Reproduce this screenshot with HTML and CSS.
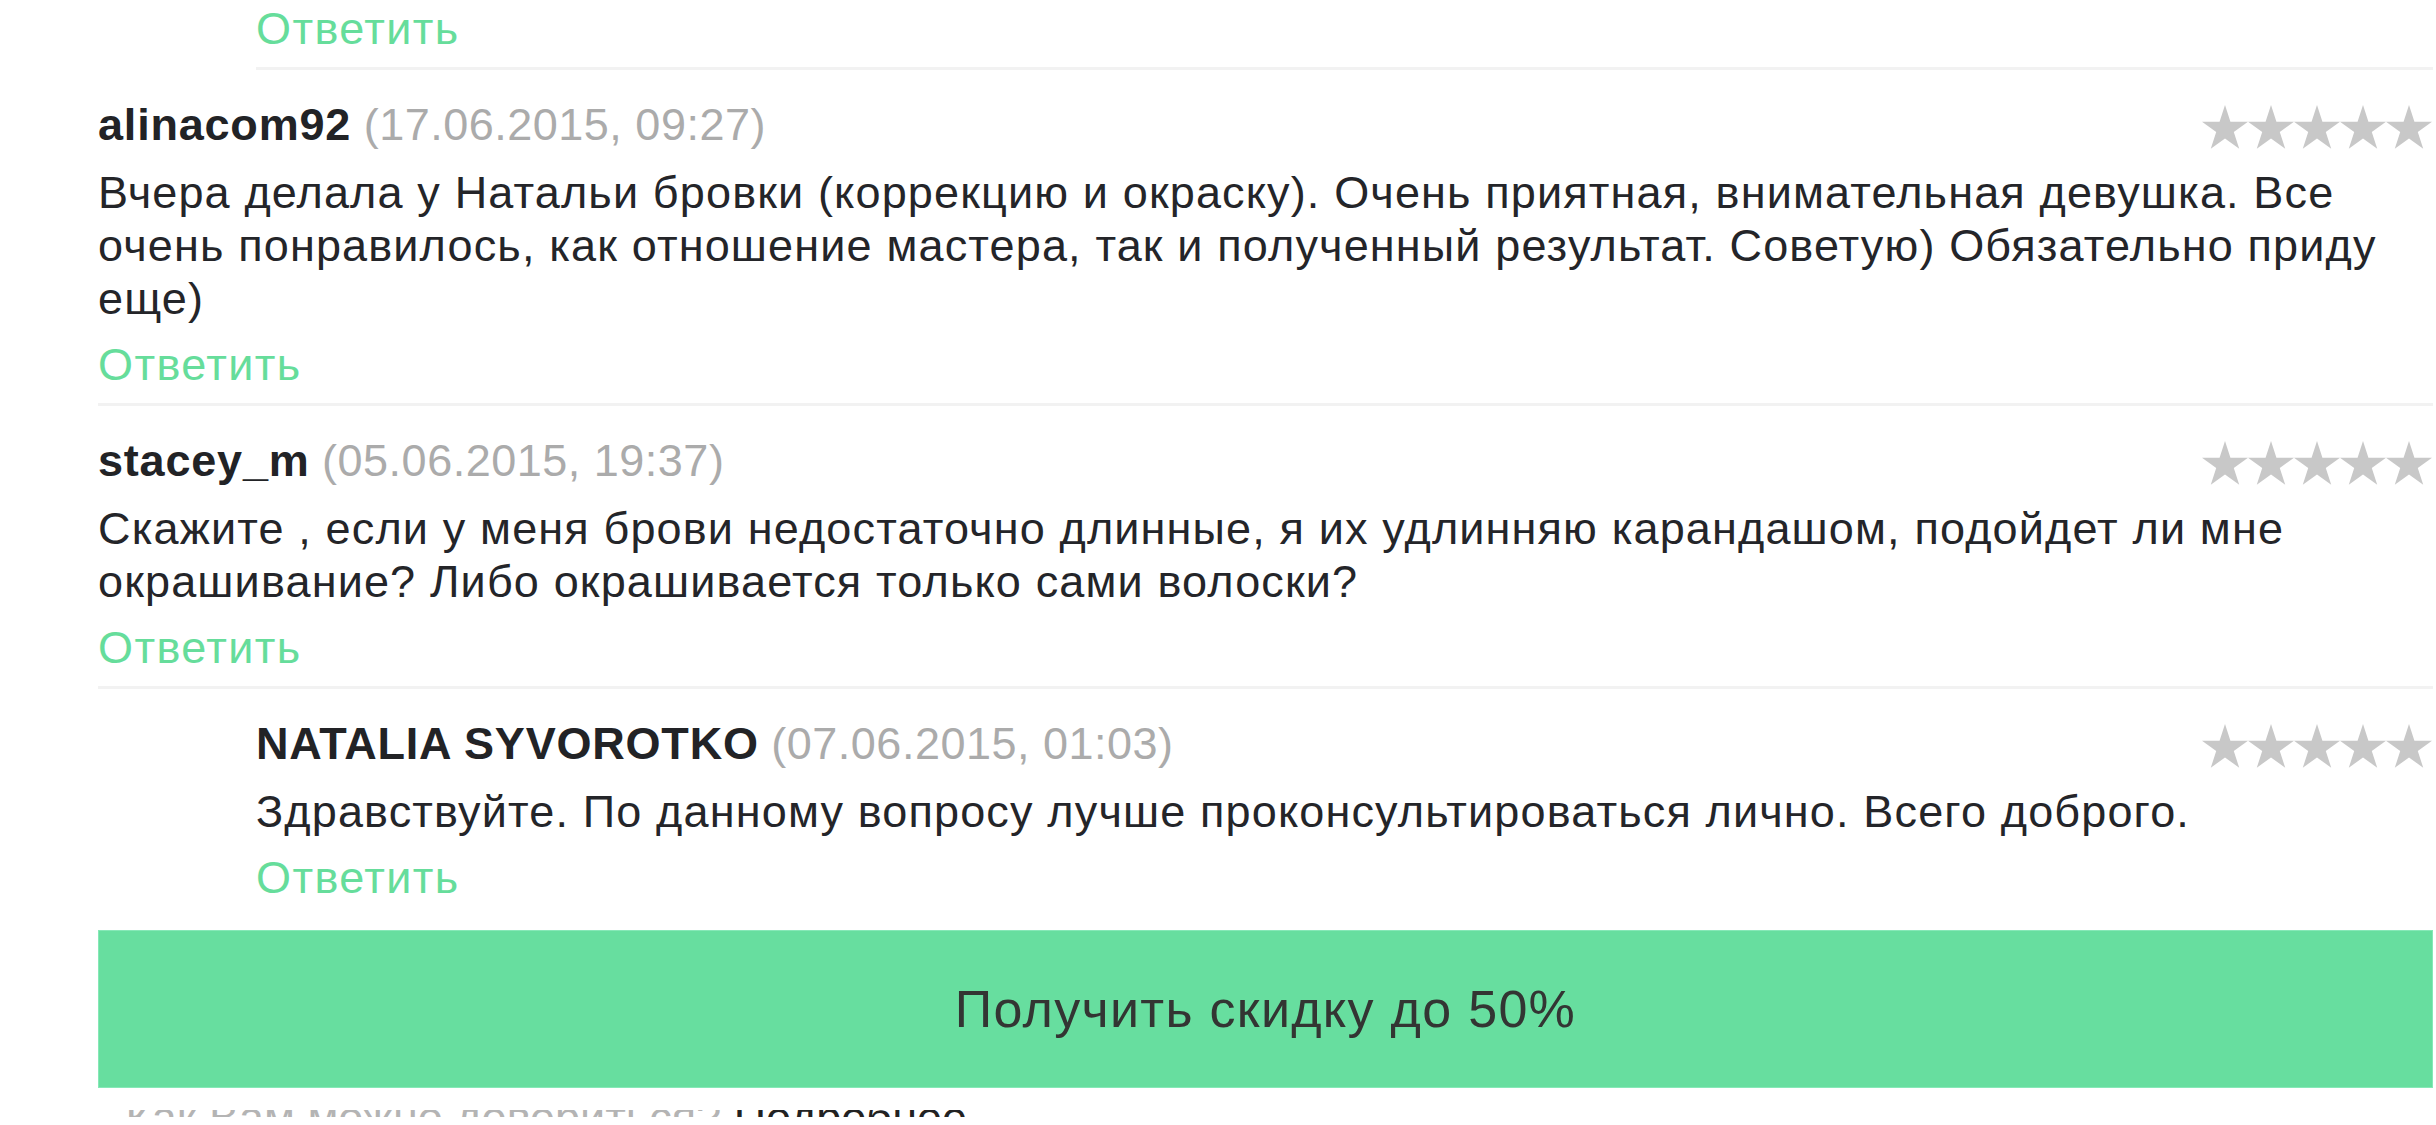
FILE: index.html
```html
<!DOCTYPE html>
<html lang="ru">
<head>
<meta charset="utf-8">
<title>Отзывы</title>
<link rel="stylesheet" href="styles.css">
</head>
<body>
<svg width="0" height="0" class="defs" aria-hidden="true">
  <defs>
    <polygon id="star" points="23,0 28.43,16.71 46,16.71 31.78,27.04 37.22,43.76 23,33.43 8.78,43.76 14.22,27.04 0,16.71 17.57,16.71"/>
  </defs>
</svg>
<div class="page">
  <div class="comment nested top">
    <a class="reply">Ответить</a>
  </div>

  <div class="comment">
    <div class="head">
      <div class="who"><b class="name">alinacom92</b> <span class="date">(17.06.2015, 09:27)</span></div>
      <svg class="stars" viewBox="0 0 230 44" width="230" height="44"><use href="#star" x="0"/><use href="#star" x="46"/><use href="#star" x="92"/><use href="#star" x="138"/><use href="#star" x="184"/></svg>
    </div>
    <p class="text">Вчера делала у Натальи бровки (коррекцию и окраску). Очень приятная, внимательная девушка. Все очень понравилось, как отношение мастера, так и полученный результат. Советую) Обязательно приду еще)</p>
    <a class="reply">Ответить</a>
  </div>

  <div class="comment">
    <div class="head">
      <div class="who"><b class="name">stacey_m</b> <span class="date">(05.06.2015, 19:37)</span></div>
      <svg class="stars" viewBox="0 0 230 44" width="230" height="44"><use href="#star" x="0"/><use href="#star" x="46"/><use href="#star" x="92"/><use href="#star" x="138"/><use href="#star" x="184"/></svg>
    </div>
    <p class="text">Скажите , если у меня брови недостаточно длинные, я их удлинняю карандашом, подойдет ли мне окрашивание? Либо окрашивается только сами волоски?</p>
    <a class="reply">Ответить</a>
  </div>

  <div class="comment nested last">
    <div class="head">
      <div class="who"><b class="name">NATALIA SYVOROTKO</b> <span class="date">(07.06.2015, 01:03)</span></div>
      <svg class="stars" viewBox="0 0 230 44" width="230" height="44"><use href="#star" x="0"/><use href="#star" x="46"/><use href="#star" x="92"/><use href="#star" x="138"/><use href="#star" x="184"/></svg>
    </div>
    <p class="text">Здравствуйте. По данному вопросу лучше проконсультироваться лично. Всего доброго.</p>
    <a class="reply">Ответить</a>
  </div>

  <div class="cta">Получить скидку до 50%</div>
  <div class="slice"><span class="slice-text">· Как Вам можно довериться? <span class="dark">Подробнее</span></span></div>
</div>
</body>
</html>
```

FILE: styles.css
```css
html, body {
  margin: 0;
  padding: 0;
  background: #ffffff;
}
body {
  font-family: "Liberation Sans", Arial, Helvetica, sans-serif;
  font-size: 45px;
  line-height: 53px;
  color: #242529;
  overflow: hidden;
  height: 1125px;
}
.defs {
  position: absolute;
  width: 0;
  height: 0;
}
.page {
  padding: 0 3px 0 98px;
}
.comment {
  padding: 28px 0 12px;
  border-bottom: 3px solid #f2f2f2;
}
.comment.top {
  padding-top: 2px;
}
.comment.nested {
  margin-left: 158px;
}
.comment.last {
  border-bottom: none;
  padding-bottom: 0;
}
.head {
  display: flex;
  justify-content: space-between;
  align-items: flex-start;
  margin-bottom: 15px;
}
.who {
  white-space: nowrap;
}
.name {
  font-weight: bold;
  color: #222326;
  letter-spacing: 0.8px;
}
.date {
  color: #ababab;
  letter-spacing: 0.5px;
}
.stars {
  display: block;
  margin-top: 7px;
  margin-right: 1px;
  fill: #c8c8c8;
}
.text {
  margin: 0 0 13px;
  letter-spacing: 1.15px;
}
.reply {
  display: block;
  color: #66dd9b;
  text-decoration: none;
  letter-spacing: 1.4px;
}
.cta {
  margin-top: 26px;
  height: 156px;
  background: #67de9f;
  border: 1px solid #86e8b7;
  display: flex;
  align-items: center;
  justify-content: center;
  font-size: 52px;
  letter-spacing: 1.3px;
  color: #333533;
}
.slice {
  margin-top: 22px;
  height: 7px;
  overflow: hidden;
}
.slice-text {
  display: block;
  margin-top: -19px;
  color: #b4b4b4;
  white-space: nowrap;
}
.slice-text .dark {
  color: #222;
}
```
